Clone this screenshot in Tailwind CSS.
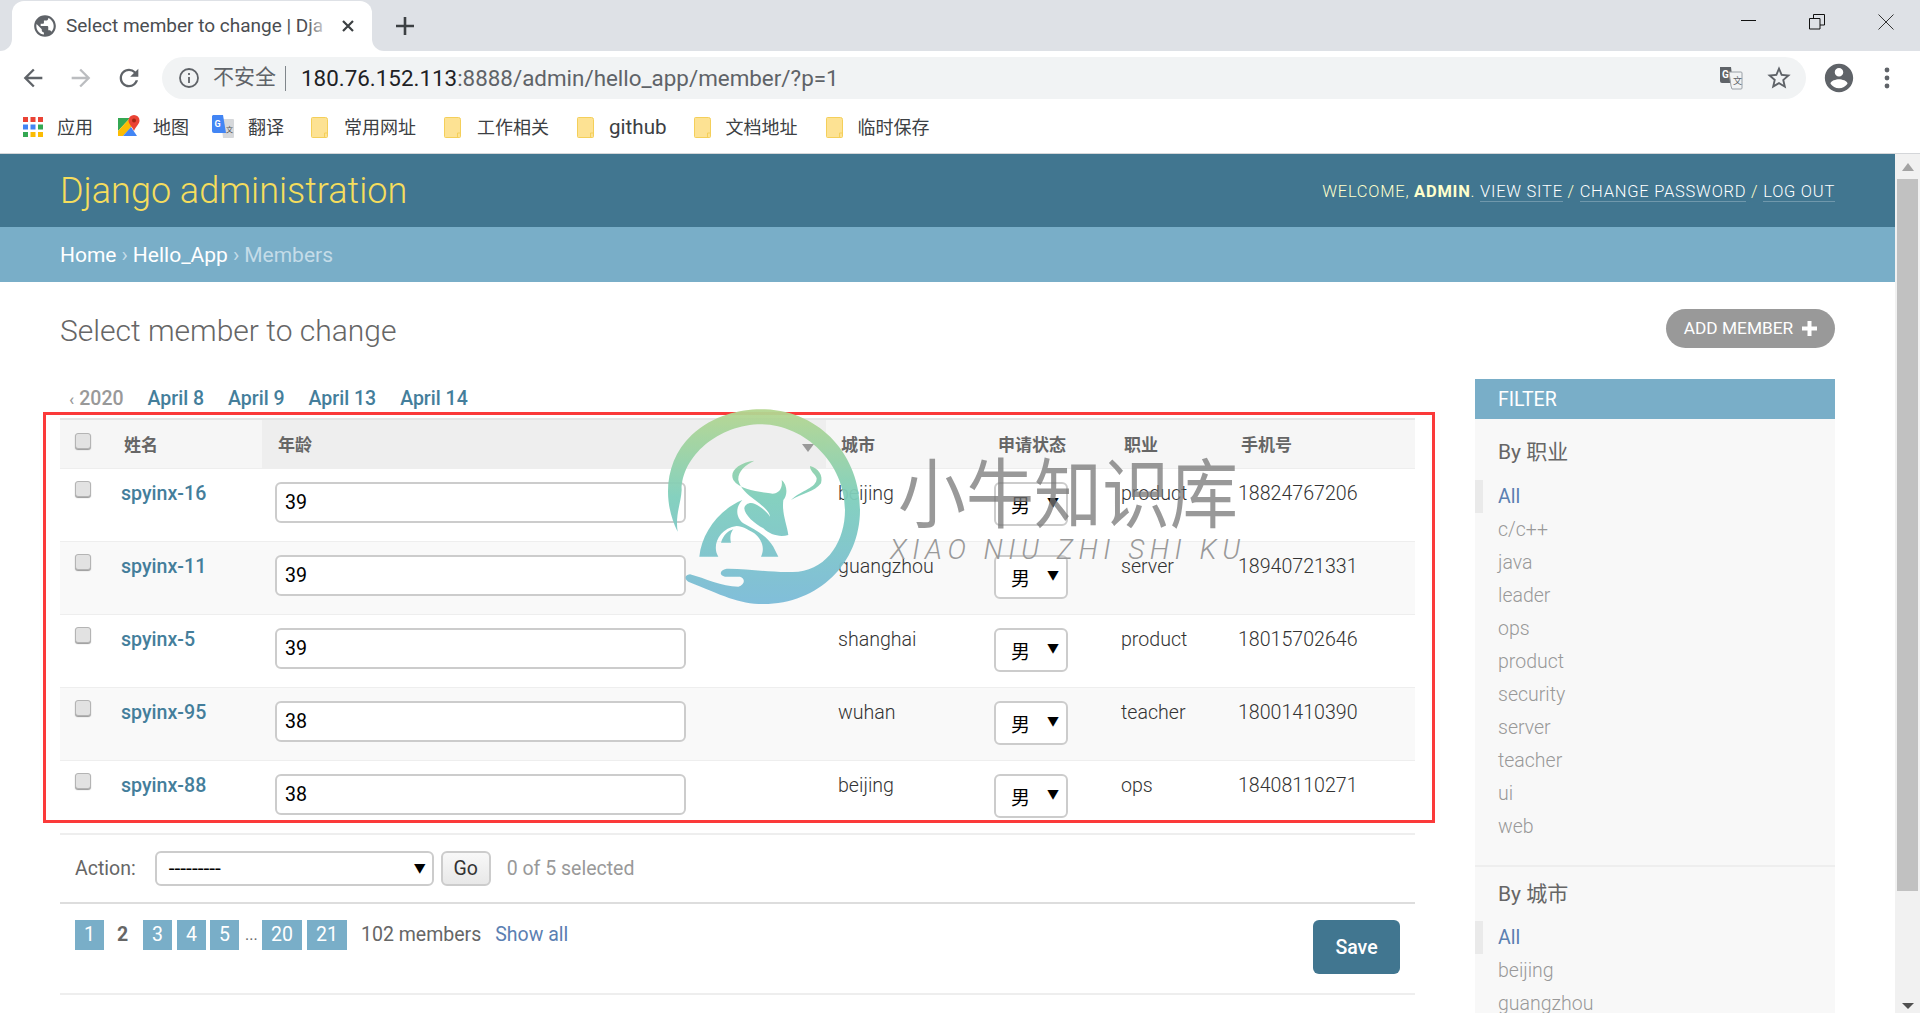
<!DOCTYPE html>
<html lang="en">
<head>
  <meta charset="UTF-8">
  <title>Select member to change | Django site admin</title>
  <script src="https://cdn.jsdelivr.net/npm/@tailwindcss/browser@4"></script>
</head>
<body class="relative h-screen overflow-hidden bg-white text-[#333] font-[family-name:Roboto,'Noto_Sans_CJK_SC',sans-serif]">

  <!-- 浏览器标签栏 -->
  <div class="relative flex h-[51px] bg-[#dee1e6]">
    <div class="relative ml-[12px] mt-[1px] flex h-[50px] w-[360px] items-center rounded-t-[12px] bg-white pl-[20px]">
      <div class="absolute bottom-0 -left-[12px] h-[12px] w-[12px] bg-white"><div class="h-full w-full rounded-br-[12px] bg-[#dee1e6]"></div></div>
      <div class="absolute bottom-0 -right-[12px] h-[12px] w-[12px] bg-white"><div class="h-full w-full rounded-bl-[12px] bg-[#dee1e6]"></div></div>
      <svg class="h-[26px] w-[26px] shrink-0" viewBox="0 0 24 24" fill="#5f6368"><path d="M12 2C6.48 2 2 6.48 2 12s4.48 10 10 10 10-4.48 10-10S17.52 2 12 2zm-1 17.93c-3.95-.49-7-3.85-7-7.93 0-.62.08-1.21.21-1.79L9 15v1c0 1.1.9 2 2 2v1.93zm6.9-2.54c-.26-.81-1-1.39-1.9-1.39h-1v-3c0-.55-.45-1-1-1H8v-2h2c.55 0 1-.45 1-1V7h2c1.1 0 2-.9 2-2v-.41c2.93 1.19 5 4.06 5 7.41 0 2.08-.8 3.97-2.1 5.39z"/></svg>
      <div class="relative ml-[8px] w-[264px] overflow-hidden whitespace-nowrap text-[19px] text-[#4a4d51]">Select member to change | Dja
        <div class="absolute inset-y-0 right-0 w-[24px] bg-gradient-to-r from-white/0 to-white"></div>
      </div>
      <svg class="ml-[11px] h-[14px] w-[14px]" viewBox="0 0 14 14" stroke="#3c4043" stroke-width="2.2"><path d="M2 2l10 10M12 2L2 12"/></svg>
    </div>
    <svg class="ml-[24px] mt-[17px] h-[18px] w-[18px]" viewBox="0 0 18 18" stroke="#3c4043" stroke-width="2.6"><path d="M9 0v18M0 9h18"/></svg>
    <div class="ml-auto flex items-start">
      <svg class="mr-[52px] mt-[14px] h-[15px] w-[16px]" viewBox="0 0 16 15" stroke="#111" fill="none"><path d="M0 6.5h15"/></svg>
      <svg class="mr-[53px] mt-[14px] h-[16px] w-[16px]" viewBox="0 0 16 16" stroke="#111" fill="none"><path d="M.5 4.5h10.500v10.500H.5zM4.500 4.500V.5H15.500V11H11"/></svg>
      <svg class="mr-[26px] mt-[14px] h-[16px] w-[16px]" viewBox="0 0 16 16" stroke="#333" fill="none"><path d="M.5.5l15 15M15.500.5l-15 15"/></svg>
    </div>
  </div>

  <!-- 地址栏 -->
  <div class="flex h-[54px] items-center bg-white">
    <svg class="ml-[19px] h-[28px] w-[28px]" viewBox="0 0 24 24" fill="#5f6368"><path d="M20 11H7.830l5.590-5.590L12 4l-8 8 8 8 1.410-1.410L7.830 13H20v-2z"/></svg>
    <svg class="ml-[20px] h-[28px] w-[28px]" viewBox="0 0 24 24" fill="#bbbdc0"><path d="M4 11h12.170l-5.590-5.590L12 4l8 8-8 8-1.410-1.410L16.170 13H4v-2z"/></svg>
    <svg class="ml-[20px] h-[28px] w-[28px]" viewBox="0 0 24 24" fill="#5f6368"><path d="M17.650 6.350A7.958 7.958 0 0 0 12 4c-4.420 0-7.990 3.580-7.990 8s3.570 8 7.990 8c3.730 0 6.840-2.550 7.730-6h-2.080A5.990 5.990 0 0 1 12 18c-3.310 0-6-2.690-6-6s2.690-6 6-6c1.660 0 3.140.69 4.220 1.780L13 11h7V4l-2.350 2.350z"/></svg>
    <div class="ml-[19px] flex h-[42px] w-[1644px] items-center rounded-full bg-[#f1f3f4] pl-[16px]">
      <svg class="h-[22px] w-[22px]" viewBox="0 0 22 22" fill="none" stroke="#5f6368" stroke-width="1.800"><circle cx="11" cy="11" r="9"/><path d="M11 10v6M11 6v2"/></svg>
      <span class="ml-[13px] text-[21px] text-[#5f6368]">不安全</span>
      <span class="ml-[9px] h-[25px] w-px bg-[#80868b]"></span>
      <span class="ml-[15px] mt-[2px] whitespace-nowrap text-[22.400px] text-[#5f6368]"><span class="text-[#202124]">180.76.152.113</span>:8888/admin/hello_app/member/?p=1</span>
      <svg class="ml-auto h-[24px] w-[24px]" viewBox="0 0 24 24"><path d="M1 1h11l2 16H3a2 2 0 0 1-2-2z" fill="#5f6368"/><path d="M10 6h12a1 1 0 0 1 1 1v15a1 1 0 0 1-1 1H13l-1-3z" fill="#f1f3f4" stroke="#9aa0a6"/><text x="3" y="12" font-size="10" font-weight="700" fill="#fff">G</text><text x="14" y="18" font-size="9" fill="#5f6368">文</text></svg>
      <svg class="ml-[22px] mr-[13px] h-[28px] w-[28px]" viewBox="0 0 24 24" fill="#5f6368"><path d="M22 9.240l-7.190-.62L12 2 9.190 8.630 2 9.240l5.460 4.730L5.820 21 12 17.270 18.180 21l-1.630-7.030L22 9.240zM12 15.400l-3.760 2.270 1-4.280-3.320-2.880 4.380-.38L12 6.100l1.710 4.040 4.380.38-3.320 2.880 1 4.280L12 15.400z"/></svg>
    </div>
    <svg class="ml-[16px] h-[34px] w-[34px]" viewBox="0 0 24 24" fill="#5f6368"><path d="M12 2C6.480 2 2 6.480 2 12s4.480 10 10 10 10-4.480 10-10S17.520 2 12 2zm0 3c1.660 0 3 1.340 3 3s-1.340 3-3 3-3-1.340-3-3 1.340-3 3-3zm0 14.200c-2.500 0-4.710-1.280-6-3.220.03-1.990 4-3.080 6-3.080 1.990 0 5.970 1.090 6 3.080-1.290 1.940-3.500 3.220-6 3.220z"/></svg>
    <svg class="ml-[28px] h-[22px] w-[6px]" viewBox="0 0 6 22" fill="#5f6368"><circle cx="3" cy="3" r="2.400"/><circle cx="3" cy="11" r="2.400"/><circle cx="3" cy="19" r="2.400"/></svg>
  </div>

  <!-- 书签栏 -->
  <div class="flex h-[49px] items-center border-b border-[#d4d6d9] pb-[4px] text-[18px] text-[#3c4043]">
    <svg class="ml-[23px] h-[20px] w-[20px]" viewBox="0 0 20 20"><path fill="#ea4335" d="M0 0h5v5H0zM7.500 0h5v5h-5zM15 0h5v5h-5z"/><path fill="#4285f4" d="M0 7.500h5v5H0zM7.500 7.500h5v5h-5z"/><path fill="#34a853" d="M15 7.500h5v5h-5zM0 15h5v5H0z"/><path fill="#fbbc04" d="M7.500 15h5v5h-5zM15 15h5v5h-5z"/></svg>
    <span class="ml-[14px]">应用</span>
    <svg class="ml-[25px] h-[24px] w-[22px]" viewBox="0 0 22 24"><path fill="#34a853" d="M0 3h12L0 16z"/><path fill="#fbbc04" d="M0 16L12 3l4 6-11 12H0z"/><path fill="#4285f4" d="M5 21l8-9 6 9z"/><path fill="#ea4335" d="M16 0a5.500 5.500 0 0 1 5.500 5.500C21.500 9 18 11 16 16c-2-5-5.500-7-5.500-10.500A5.500 5.500 0 0 1 16 0z"/><circle cx="16" cy="5.500" r="2" fill="#a52714"/></svg>
    <span class="ml-[13px]">地图</span>
    <svg class="ml-[23px] h-[24px] w-[22px]" viewBox="0 0 22 24"><path d="M9 4h12a1 1 0 0 1 1 1v17a1 1 0 0 1-1 1H11z" fill="#d6d8db"/><path d="M1 0h10l3 18H2a2 2 0 0 1-2-2V1z" fill="#4285f4"/><text x="2.500" y="12" font-size="9" font-weight="700" fill="#fff">G</text><text x="14" y="17" font-size="7" fill="#555">文</text></svg>
    <span class="ml-[14px]">翻译</span>
    <svg class="ml-[27px] h-[21px] w-[18px]" viewBox="0 0 18 21"><path d="M1.500.5h13a2 2 0 0 1 2 2v17a1 1 0 0 1-1 1h-14a1 1 0 0 1-1-1v-18a1 1 0 0 1 1-1z" fill="#fde293" stroke="#f4cf5a"/><path d="M13.500 20v-4h3" fill="none" stroke="#f4cf5a"/></svg>
    <span class="ml-[15px]">常用网址</span>
    <svg class="ml-[28px] h-[21px] w-[18px]" viewBox="0 0 18 21"><path d="M1.500.5h13a2 2 0 0 1 2 2v17a1 1 0 0 1-1 1h-14a1 1 0 0 1-1-1v-18a1 1 0 0 1 1-1z" fill="#fde293" stroke="#f4cf5a"/><path d="M13.500 20v-4h3" fill="none" stroke="#f4cf5a"/></svg>
    <span class="ml-[15px]">工作相关</span>
    <svg class="ml-[28px] h-[21px] w-[18px]" viewBox="0 0 18 21"><path d="M1.500.5h13a2 2 0 0 1 2 2v17a1 1 0 0 1-1 1h-14a1 1 0 0 1-1-1v-18a1 1 0 0 1 1-1z" fill="#fde293" stroke="#f4cf5a"/><path d="M13.500 20v-4h3" fill="none" stroke="#f4cf5a"/></svg>
    <span class="ml-[14px] text-[20.600px]">github</span>
    <svg class="ml-[27px] h-[21px] w-[18px]" viewBox="0 0 18 21"><path d="M1.500.5h13a2 2 0 0 1 2 2v17a1 1 0 0 1-1 1h-14a1 1 0 0 1-1-1v-18a1 1 0 0 1 1-1z" fill="#fde293" stroke="#f4cf5a"/><path d="M13.500 20v-4h3" fill="none" stroke="#f4cf5a"/></svg>
    <span class="ml-[14px]">文档地址</span>
    <svg class="ml-[28px] h-[21px] w-[18px]" viewBox="0 0 18 21"><path d="M1.500.5h13a2 2 0 0 1 2 2v17a1 1 0 0 1-1 1h-14a1 1 0 0 1-1-1v-18a1 1 0 0 1 1-1z" fill="#fde293" stroke="#f4cf5a"/><path d="M13.500 20v-4h3" fill="none" stroke="#f4cf5a"/></svg>
    <span class="ml-[14px]">临时保存</span>
  </div>

  <div class="flex h-[859px]">
    <!-- Django admin 页面 -->
    <div class="w-[1895px] overflow-hidden">
      <div class="flex h-[73px] items-center justify-between bg-[#417690] pl-[60px] pr-[60px]">
        <div class="text-[36px] font-light text-[#f5dd5d]">Django administration</div>
        <div class="mt-[4px] whitespace-nowrap text-[16.500px] font-light tracking-[0.750px] text-[#ffc] uppercase">
          Welcome, <strong class="font-bold">admin</strong>.
          <a class="border-b-[1.500px] border-white/25 text-white">View site</a> /
          <a class="border-b-[1.500px] border-white/25 text-white">Change password</a> /
          <a class="border-b-[1.500px] border-white/25 text-white">Log out</a>
        </div>
      </div>
      <div class="flex h-[55px] items-center bg-[#79aec8] pl-[60px] pt-[3px] text-[21px] font-normal text-white">
        <a>Home</a><span class="mx-[5px] text-[#c4dce8]">›</span><a>Hello_App</a><span class="mx-[5px] text-[#c4dce8]">›</span><span class="text-[#c4dce8]">Members</span>
      </div>

      <div class="pl-[60px] pr-[60px] pt-[27px]">
        <div class="flex h-[39px] items-center justify-between">
          <h1 class="mt-[4px] text-[30px] font-light text-[#666]">Select member to change</h1>
          <a class="flex h-[39px] w-[169px] items-center justify-center gap-[9px] rounded-full bg-[#999] text-[17.300px] font-normal text-white">ADD MEMBER
            <svg class="h-[15px] w-[15px]" viewBox="0 0 15 15" fill="#fff"><path d="M5.500 0h4v5.500H15v4H9.500V15h-4V9.500H0v-4h5.500z"/></svg>
          </a>
        </div>

        <div class="mt-[31px] flex gap-[60px]">
          <!-- 列表 -->
          <div class="w-[1355px]">
            <div class="flex h-[39px] items-center gap-[24px] pl-[9px] pt-[1px] text-[19.500px] font-medium text-[#447e9b]">
              <span class="text-[#999]"><span class="mr-[5px] text-[17px]">‹</span>2020</span>
              <a>April 8</a><a>April 9</a><a>April 13</a><a>April 14</a>
            </div>
            <table class="w-full table-fixed border-t-2 border-[#e4e4e4] text-[19.600px] font-light">
              <colgroup><col class="w-[48px]"><col class="w-[154px]"><col class="w-[564px]"><col class="w-[156px]"><col class="w-[127px]"><col class="w-[117px]"><col></colgroup>
              <thead>
                <tr class="h-[49px] border-b border-[#eee] bg-[#f6f6f6] text-left align-top text-[17px] font-bold text-[#666]">
                  <th class="pl-[15px] pt-[13px]"><input type="checkbox" class="block h-[16px] w-[16px] appearance-none rounded-[3px] border border-[#b4b4b4] bg-[#e2e2e2] shadow-[0_1px_1px_#999]"></th>
                  <th class="pl-[16px] pt-[13px]">姓名</th>
                  <th class="relative bg-[#eee] pl-[16px] pt-[13px]">年龄
                    <svg class="absolute right-[12px] top-[24px] h-[8px] w-[12px]" viewBox="0 0 12 8" fill="#999"><path d="M0 0h12L6 8z"/></svg>
                  </th>
                  <th class="pl-[15px] pt-[13px]">城市</th>
                  <th class="pl-[16px] pt-[13px]">申请状态</th>
                  <th class="pl-[15px] pt-[13px]">职业</th>
                  <th class="pl-[15px] pt-[13px]">手机号</th>
                </tr>
              </thead>
              <tbody class="align-top">
                <tr class="h-[73px] border-b border-[#eee] bg-white">
                  <td class="pl-[15px] pt-[12px]"><input type="checkbox" class="block h-[16px] w-[16px] appearance-none rounded-[3px] border border-[#b4b4b4] bg-[#e2e2e2] shadow-[0_1px_1px_#999]"></td>
                  <td class="pl-[13px] pt-[10px]"><a class="font-medium text-[#447e9b]">spyinx-16</a></td>
                  <td class="pl-[13px] pt-[13px]"><input value="39" class="block h-[41px] w-[411px] rounded-[6px] border-2 border-[#ccc] bg-white px-[8px] font-normal text-black"></td>
                  <td class="pl-[12px] pt-[10px]">beijing</td>
                  <td class="pl-[12px] pt-[13px]"><div class="flex h-[44px] w-[74px] items-center justify-between rounded-[6px] border-2 border-[#ccc] bg-white pl-[15px] pr-[7px] text-[19px] font-normal text-black"><span class="mt-[7px]">男</span><span class="-mt-[1px] text-[12px]">▼</span></div></td>
                  <td class="pl-[12px] pt-[10px]">product</td>
                  <td class="pl-[12px] pt-[10px]">18824767206</td>
                </tr>
                <tr class="h-[73px] border-b border-[#eee] bg-[#f9f9f9]">
                  <td class="pl-[15px] pt-[12px]"><input type="checkbox" class="block h-[16px] w-[16px] appearance-none rounded-[3px] border border-[#b4b4b4] bg-[#e2e2e2] shadow-[0_1px_1px_#999]"></td>
                  <td class="pl-[13px] pt-[10px]"><a class="font-medium text-[#447e9b]">spyinx-11</a></td>
                  <td class="pl-[13px] pt-[13px]"><input value="39" class="block h-[41px] w-[411px] rounded-[6px] border-2 border-[#ccc] bg-white px-[8px] font-normal text-black"></td>
                  <td class="pl-[12px] pt-[10px]">guangzhou</td>
                  <td class="pl-[12px] pt-[13px]"><div class="flex h-[44px] w-[74px] items-center justify-between rounded-[6px] border-2 border-[#ccc] bg-white pl-[15px] pr-[7px] text-[19px] font-normal text-black"><span class="mt-[7px]">男</span><span class="-mt-[1px] text-[12px]">▼</span></div></td>
                  <td class="pl-[12px] pt-[10px]">server</td>
                  <td class="pl-[12px] pt-[10px]">18940721331</td>
                </tr>
                <tr class="h-[73px] border-b border-[#eee] bg-white">
                  <td class="pl-[15px] pt-[12px]"><input type="checkbox" class="block h-[16px] w-[16px] appearance-none rounded-[3px] border border-[#b4b4b4] bg-[#e2e2e2] shadow-[0_1px_1px_#999]"></td>
                  <td class="pl-[13px] pt-[10px]"><a class="font-medium text-[#447e9b]">spyinx-5</a></td>
                  <td class="pl-[13px] pt-[13px]"><input value="39" class="block h-[41px] w-[411px] rounded-[6px] border-2 border-[#ccc] bg-white px-[8px] font-normal text-black"></td>
                  <td class="pl-[12px] pt-[10px]">shanghai</td>
                  <td class="pl-[12px] pt-[13px]"><div class="flex h-[44px] w-[74px] items-center justify-between rounded-[6px] border-2 border-[#ccc] bg-white pl-[15px] pr-[7px] text-[19px] font-normal text-black"><span class="mt-[7px]">男</span><span class="-mt-[1px] text-[12px]">▼</span></div></td>
                  <td class="pl-[12px] pt-[10px]">product</td>
                  <td class="pl-[12px] pt-[10px]">18015702646</td>
                </tr>
                <tr class="h-[73px] border-b border-[#eee] bg-[#f9f9f9]">
                  <td class="pl-[15px] pt-[12px]"><input type="checkbox" class="block h-[16px] w-[16px] appearance-none rounded-[3px] border border-[#b4b4b4] bg-[#e2e2e2] shadow-[0_1px_1px_#999]"></td>
                  <td class="pl-[13px] pt-[10px]"><a class="font-medium text-[#447e9b]">spyinx-95</a></td>
                  <td class="pl-[13px] pt-[13px]"><input value="38" class="block h-[41px] w-[411px] rounded-[6px] border-2 border-[#ccc] bg-white px-[8px] font-normal text-black"></td>
                  <td class="pl-[12px] pt-[10px]">wuhan</td>
                  <td class="pl-[12px] pt-[13px]"><div class="flex h-[44px] w-[74px] items-center justify-between rounded-[6px] border-2 border-[#ccc] bg-white pl-[15px] pr-[7px] text-[19px] font-normal text-black"><span class="mt-[7px]">男</span><span class="-mt-[1px] text-[12px]">▼</span></div></td>
                  <td class="pl-[12px] pt-[10px]">teacher</td>
                  <td class="pl-[12px] pt-[10px]">18001410390</td>
                </tr>
                <tr class="h-[73px] bg-white">
                  <td class="pl-[15px] pt-[12px]"><input type="checkbox" class="block h-[16px] w-[16px] appearance-none rounded-[3px] border border-[#b4b4b4] bg-[#e2e2e2] shadow-[0_1px_1px_#999]"></td>
                  <td class="pl-[13px] pt-[10px]"><a class="font-medium text-[#447e9b]">spyinx-88</a></td>
                  <td class="pl-[13px] pt-[13px]"><input value="38" class="block h-[41px] w-[411px] rounded-[6px] border-2 border-[#ccc] bg-white px-[8px] font-normal text-black"></td>
                  <td class="pl-[12px] pt-[10px]">beijing</td>
                  <td class="pl-[12px] pt-[13px]"><div class="flex h-[44px] w-[74px] items-center justify-between rounded-[6px] border-2 border-[#ccc] bg-white pl-[15px] pr-[7px] text-[19px] font-normal text-black"><span class="mt-[7px]">男</span><span class="-mt-[1px] text-[12px]">▼</span></div></td>
                  <td class="pl-[12px] pt-[10px]">ops</td>
                  <td class="pl-[12px] pt-[10px]">18408110271</td>
                </tr>
              </tbody>
            </table>

            <!-- 批量操作 -->
            <div class="flex h-[71px] items-center border-y-2 border-t-[#eee] border-b-[#ddd] pl-[15px] text-[19.500px] font-light text-[#666]">
              <span class="font-normal">Action:</span>
              <div class="ml-[19px] flex h-[35px] w-[279px] items-center justify-between rounded-[6px] border-2 border-[#ccc] bg-white pl-[12px] pr-[6px] text-[21px] font-normal text-black"><span>---------</span><span class="text-[12px]">▼</span></div>
              <button class="ml-[7px] h-[35px] w-[50px] rounded-[6px] border-2 border-[#ccc] bg-gradient-to-b from-[#f8f8f8] to-[#e8e8e8] text-[19.500px] font-normal text-[#333]">Go</button>
              <span class="ml-[16px] font-normal text-[#999]">0 of 5 selected</span>
            </div>

            <!-- 分页 -->
            <div class="flex h-[91px] items-start justify-between border-b-2 border-[#eee] pl-[15px] pr-[15px]">
              <div class="mt-[16px] flex h-[30px] items-center text-[19.500px] font-normal text-[#666]">
                <a class="flex h-[30px] w-[29px] items-center justify-center bg-[#79aec8] text-white">1</a>
                <span class="ml-[13px] w-[12px] font-bold">2</span>
                <a class="ml-[14px] flex h-[30px] w-[29px] items-center justify-center bg-[#79aec8] text-white">3</a>
                <a class="ml-[5px] flex h-[30px] w-[29px] items-center justify-center bg-[#79aec8] text-white">4</a>
                <a class="ml-[4px] flex h-[30px] w-[29px] items-center justify-center bg-[#79aec8] text-white">5</a>
                <span class="ml-[6px] w-[11px] text-[16px]">...</span>
                <a class="ml-[6px] flex h-[30px] w-[40px] items-center justify-center bg-[#79aec8] text-white">20</a>
                <a class="ml-[5px] flex h-[30px] w-[40px] items-center justify-center bg-[#79aec8] text-white">21</a>
                <span class="ml-[14px]">102 members</span>
                <a class="ml-[14px] text-[#5b80b2]">Show all</a>
              </div>
              <button class="mt-[16px] h-[54px] w-[87px] rounded-[6px] bg-[#417690] pt-[2px] text-[19.500px] font-medium text-white">Save</button>
            </div>
          </div>

          <!-- 过滤器 -->
          <div class="h-[700px] w-[360px] bg-[#f8f8f8]">
            <h2 class="flex h-[40px] items-center bg-[#79aec8] pl-[23px] pt-[1px] text-[19.500px] font-normal text-white">FILTER</h2>
            <h3 class="flex h-[61px] items-center pl-[23px] pt-[6px] text-[21px] font-normal text-[#666]">By 职业</h3>
            <ul class="text-[19.500px] font-light text-[#999]">
              <li class="flex h-[33px] items-center border-l-[8px] border-[#eaeaea] pl-[15px] font-normal text-[#5b80b2]">All</li>
              <li class="flex h-[33px] items-center pl-[23px]">c/c++</li>
              <li class="flex h-[33px] items-center pl-[23px]">java</li>
              <li class="flex h-[33px] items-center pl-[23px]">leader</li>
              <li class="flex h-[33px] items-center pl-[23px]">ops</li>
              <li class="flex h-[33px] items-center pl-[23px]">product</li>
              <li class="flex h-[33px] items-center pl-[23px]">security</li>
              <li class="flex h-[33px] items-center pl-[23px]">server</li>
              <li class="flex h-[33px] items-center pl-[23px]">teacher</li>
              <li class="flex h-[33px] items-center pl-[23px]">ui</li>
              <li class="flex h-[33px] items-center pl-[23px]">web</li>
            </ul>
            <div class="mt-[22px] h-[2px] bg-[#eee]"></div>
            <h3 class="mb-[2px] flex h-[52px] items-center pl-[23px] pt-[4px] text-[21px] font-normal text-[#666]">By 城市</h3>
            <ul class="text-[19.500px] font-light text-[#999]">
              <li class="flex h-[33px] items-center border-l-[8px] border-[#eaeaea] pl-[15px] font-normal text-[#5b80b2]">All</li>
              <li class="flex h-[33px] items-center pl-[23px]">beijing</li>
              <li class="flex h-[33px] items-center pl-[23px]">guangzhou</li>
            </ul>
          </div>
        </div>
      </div>
    </div>

    <!-- 滚动条 -->
    <div class="relative w-[25px] bg-[#f1f1f1]">
      <svg class="absolute left-[7px] top-[9px] h-[8px] w-[12px]" viewBox="0 0 12 8" fill="#a3a3a3"><path d="M6 0l6 8H0z"/></svg>
      <div class="absolute left-[2px] top-[25px] h-[712px] w-[21px] bg-[#c1c1c1]"></div>
      <svg class="absolute bottom-[4px] left-[7px] h-[6px] w-[12px]" viewBox="0 0 12 6" fill="#505050"><path d="M0 0h12L6 6z"/></svg>
    </div>
  </div>

  <!-- 红框标注 -->
  <div class="pointer-events-none absolute left-[43px] top-[412px] h-[411px] w-[1392px] border-[3px] border-[#fb3a3a]"></div>

  <!-- 水印 -->
  <svg class="pointer-events-none absolute left-[655px] top-[400px] h-[215px] w-[220px] opacity-95" viewBox="0 0 660 645">
    <defs><linearGradient id="wm" gradientUnits="userSpaceOnUse" x1="0" y1="28" x2="0" y2="612"><stop offset="0" stop-color="#b5d68f"/><stop offset=".45" stop-color="#7fcfbc"/><stop offset="1" stop-color="#7bbbd9"/></linearGradient></defs>
    <g fill="url(#wm)">
      <path d="M68 395C20 300 30 180 110 105C180 40 270 25 330 28C500 35 615 170 615 330C615 490 490 612 325 612C250 612 200 585 100 545C88 538 88 525 105 523C150 535 200 560 250 560C270 555 272 535 255 530L210 530C190 525 195 510 215 506C280 505 350 520 430 515C520 505 570 420 570 330C570 190 450 75 320 73C190 73 80 170 80 270C78 310 60 345 68 395Z"/>
      <path d="M298 182C250 188 222 215 235 240C255 270 310 275 345 280C365 285 385 270 380 240C398 255 398 285 385 300C380 340 395 370 400 405C375 412 345 405 325 385C300 372 268 345 268 325C270 312 285 305 300 312C320 322 335 335 345 350C345 335 320 315 300 300C280 285 255 265 250 240C248 215 270 195 298 182Z"/>
      <path d="M465 198C490 205 505 225 498 250C480 275 440 280 408 300C440 270 485 265 485 235C480 220 465 215 465 198Z"/>
      <path d="M262 300C190 330 140 400 133 470L190 470C170 440 190 385 245 378C265 380 272 385 298 400C322 420 330 445 318 470L370 470L355 440C335 405 300 390 265 370C245 355 238 325 262 300Z"/>
      <path d="M198 428C205 405 220 392 235 388C225 400 225 415 228 428Z"/>
    </g>
  </svg>
  <div class="pointer-events-none absolute left-[898px] top-[442px] origin-center scale-y-[1.120] whitespace-nowrap text-[68px] leading-[96px] font-normal text-[#777]/75 font-[family-name:'Noto_Sans_CJK_SC',sans-serif]">小牛知识库</div>
  <div class="pointer-events-none absolute left-[890px] top-[534px] whitespace-nowrap text-[28px] leading-[32px] font-light tracking-[5.500px] text-[#999] italic">XIAO NIU ZHI SHI KU</div>
</body>
</html>
